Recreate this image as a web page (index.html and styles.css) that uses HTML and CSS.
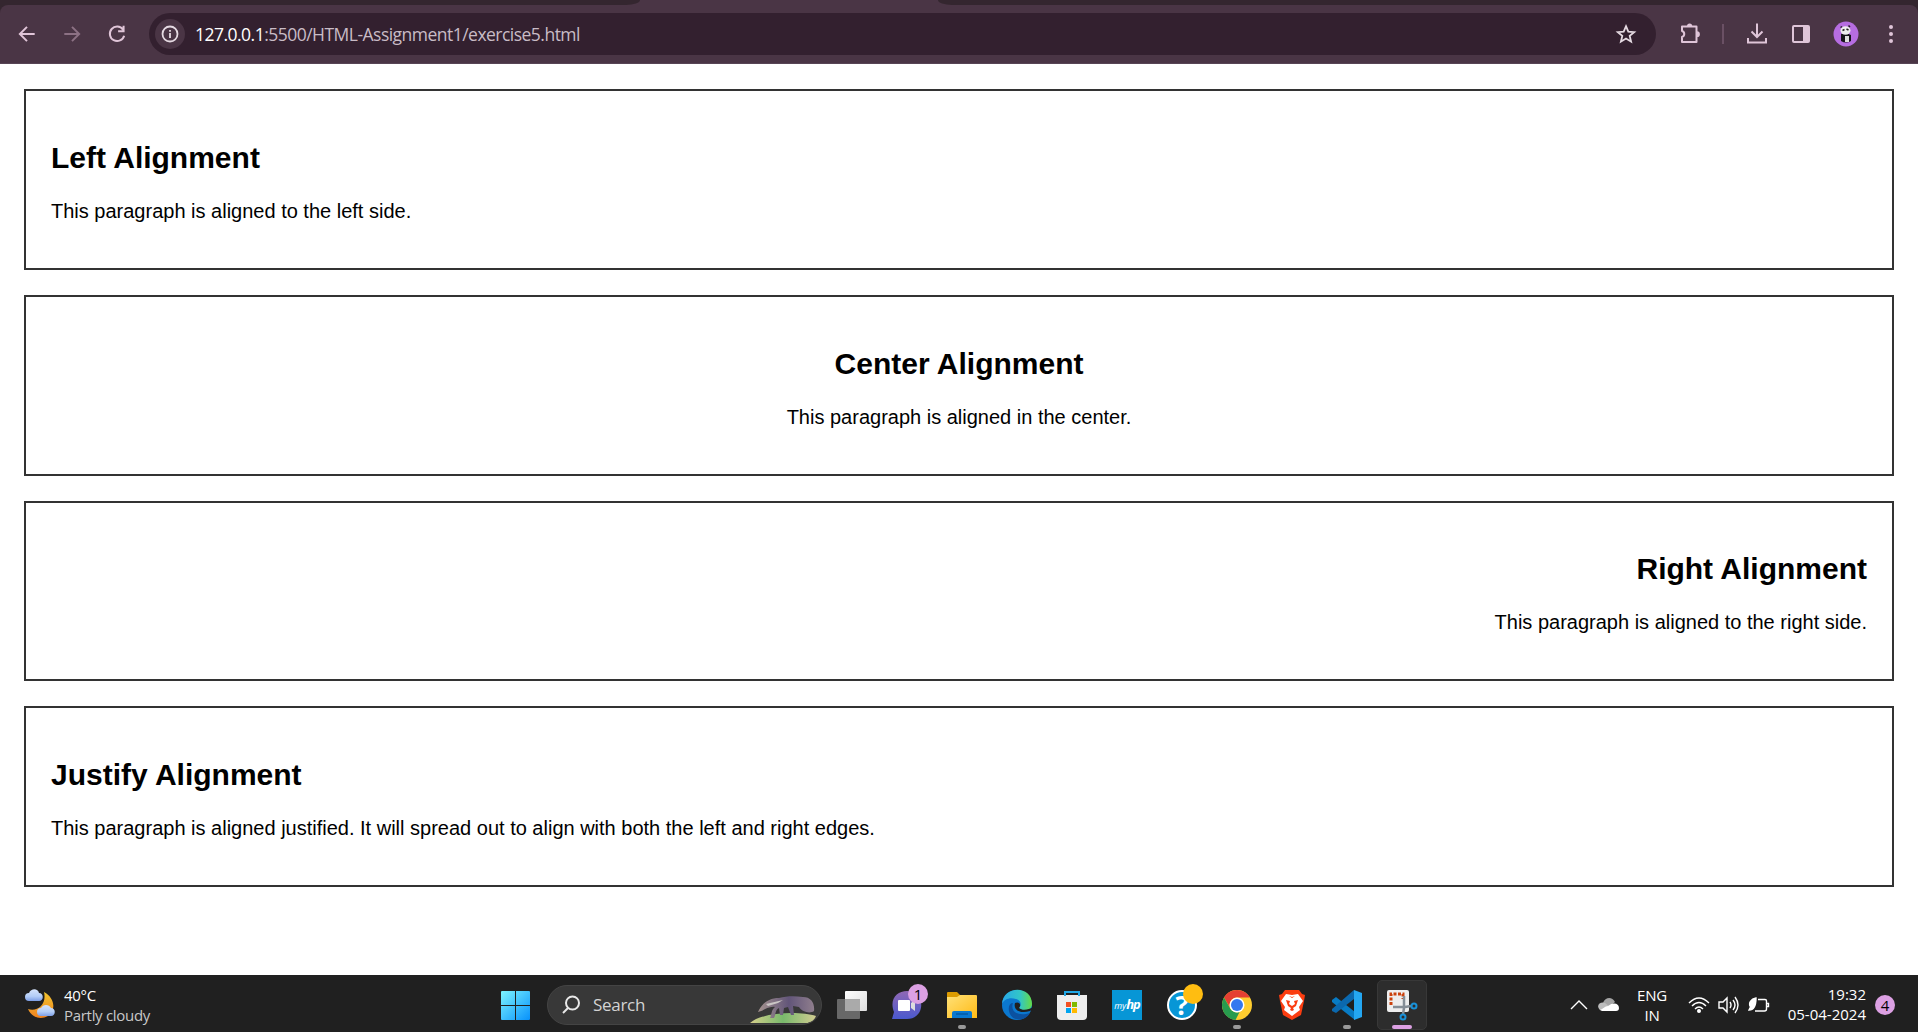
FILE: index.html
```html
<!DOCTYPE html>
<html lang="en">
<head>
<meta charset="utf-8">
<title>Text alignment</title>
<link rel="stylesheet" href="styles.css">
</head>
<body>
<header class="browser">
  <div class="tab-edge"><span class="tab-left"></span><span class="tab-right"></span></div>
  <div class="toolbar">
    <svg class="nav-icon" viewBox="0 0 20 20"><path d="M17 10H4M10 3.500 3.500 10l6.500 6.500"/></svg>
    <svg class="nav-icon dim" viewBox="0 0 20 20"><path d="M3 10h13M10 3.500l6.500 6.500-6.500 6.500"/></svg>
    <svg class="nav-icon" viewBox="0 0 20 20"><path d="M15.500 6A6.600 6.600 0 1 0 16.500 11.500M16 2.500v5h-5"/></svg>
    <div class="address">
      <span class="info"><svg width="18" height="18" viewBox="0 0 18 18"><circle cx="9" cy="9" r="7.500"/><path d="M9 8v5M9 5v1.800"/></svg></span>
      <span class="url"><b>127.0.0.1</b>:5500/HTML-Assignment1/exercise5.html</span>
      <svg class="star" width="22" height="22" viewBox="0 0 22 22"><path d="m11 3.200 2.300 5.400 5.900.5-4.500 3.800 1.400 5.800-5.100-3.100-5.100 3.100 1.400-5.800-4.500-3.800 5.900-.5z"/></svg>
    </div>
    <div class="actions">
      <svg width="24" height="24" viewBox="0 0 24 24"><path d="M4 4.500h14.500V20H4v-5c3-1 3-5 0-6z" stroke-linejoin="round"/><path class="solid" d="M9 4a2.600 2.600 0 0 1 5.200 0zM19 9.300a2.900 2.900 0 0 1 0 5.800z"/></svg>
      <i class="divider"></i>
      <svg width="24" height="24" viewBox="0 0 24 24"><path d="M12 1.500v13M6.500 9.500l5.500 5.500 5.500-5.500M3 16v4.500h18V16"/></svg>
      <svg width="24" height="24" viewBox="0 0 24 24"><rect x="4" y="4" width="16" height="16" rx="1"/><path class="solid" d="M14 4h6v16h-6z"/></svg>
      <svg class="avatar" width="26" height="26" viewBox="0 0 26 26"><circle cx="13" cy="13" r="12.500" fill="#b66de1"/><path d="M8 13q5-2 10 1v6q-5 3-10 0z" fill="#151419"/><ellipse cx="12.500" cy="9.500" rx="5" ry="4.200" fill="#eee"/><path d="M12 15h4v6h-4z" fill="#ddd"/><path d="M7.500 6.500l1.500-1M15.500 4.500l1.500 1.500M9.500 9.500l2-1M13.500 8l2 1" stroke="#222" stroke-width="1.500"/></svg>
      <svg width="24" height="24" viewBox="0 0 24 24"><g class="dots"><circle cx="12" cy="5" r="2"/><circle cx="12" cy="12" r="2"/><circle cx="12" cy="19" r="2"/></g></svg>
    </div>
  </div>
</header>
<main class="page">
  <section class="box left"><h2>Left Alignment</h2><p>This paragraph is aligned to the left side.</p></section>
  <section class="box center"><h2>Center Alignment</h2><p>This paragraph is aligned in the center.</p></section>
  <section class="box right"><h2>Right Alignment</h2><p>This paragraph is aligned to the right side.</p></section>
  <section class="box justify"><h2>Justify Alignment</h2><p>This paragraph is aligned justified. It will spread out to align with both the left and right edges.</p></section>
</main>
<footer class="taskbar">
  <div class="weather">
    <svg width="32" height="32" viewBox="0 0 32 32"><defs><linearGradient id="moon" x2="0" y2="1"><stop stop-color="#f2c52e"/><stop offset="1" stop-color="#ef8220"/></linearGradient><linearGradient id="cloud" x2="0" y2="1"><stop stop-color="#d5e3fb"/><stop offset=".6" stop-color="#b3cdf7"/><stop offset="1" stop-color="#7d9ee6"/></linearGradient></defs><path d="M20 3c10 5 13 18 4 24C17 31 8 29 4 20c9 3 19-4 16-17z" fill="url(#moon)"/><path d="M5 12a4 4 0 0 1 0-8c2-5 9-5 10 0 5 0 5 8 0 8z" fill="url(#cloud)"/><path d="M17 27a4 4 0 0 1 0-8c2-4 8-4 10 0 5 0 5 8 0 8z" fill="url(#cloud)"/></svg>
    <div><span class="temp">40°C</span><span class="sky">Partly cloudy</span></div>
  </div>
  <div class="apps">
    <svg class="start" width="29" height="29" viewBox="0 0 29 29"><defs><linearGradient id="win" gradientUnits="userSpaceOnUse" x2="29" y2="29"><stop stop-color="#7df4ff"/><stop offset="1" stop-color="#0791fb"/></linearGradient></defs><path fill="url(#win)" d="M0 1q0-1 1-1h13v14H0zM15 0h13q1 0 1 1v13H15zM0 15h14v14H1q-1 0-1-1zM15 15h14v13q0 1-1 1H15z"/></svg>
    <div class="search">
      <svg width="20" height="20" viewBox="0 0 20 20"><circle cx="11.500" cy="8" r="6.500"/><path d="m7 13-5 5"/></svg>
      <span>Search</span>
      <svg class="anteater" width="68" height="30" viewBox="0 0 68 30"><defs><linearGradient id="hill"><stop stop-color="#d5cf8b"/><stop offset=".5" stop-color="#79b96c"/><stop offset="1" stop-color="#d1cc91"/></linearGradient><linearGradient id="fur"><stop stop-color="#a4928e"/><stop offset=".55" stop-color="#625579"/><stop offset="1" stop-color="#8f7e8d"/></linearGradient></defs><path d="M1 29c12-11 50-12 66-7-2 5-6 7-10 7z" fill="url(#hill)"/><path d="M9 18c4-9 11-14 21-14 8-2 15-2 24-1 8 0 12 6 11 14-4 3-12 1-15-4l-6-1 1 9h-3l-3-8-4 1-1 7h-3l-1-7c-4 2-3 6-5 10h-4c2-4 1-8 5-11-7-1-11 4-17 5z" fill="url(#fur)"/><path d="m17 10 17-4-5 3-10 3z" fill="#cbc7c5"/></svg>
    </div>
    <div class="app"><svg width="32" height="32" viewBox="0 0 32 32"><defs><linearGradient id="tv" x2="1" y2="1"><stop stop-color="#fff"/><stop offset="1" stop-color="#ddd"/></linearGradient></defs><rect x="9" y="2" width="22" height="20" rx="1" fill="url(#tv)"/><rect x="1" y="10" width="23" height="20" rx="1" fill="#707070" opacity=".9"/><path d="M9 10h15v12H9z" fill="#aaa"/></svg></div>
    <div class="app"><svg width="32" height="32" viewBox="0 0 32 32"><defs><linearGradient id="chat" x2="0" y2="1"><stop stop-color="#9068b4"/><stop offset="1" stop-color="#4a59ce"/></linearGradient></defs><path d="M1 30l2-7C-2 10 6 2 16 2c19 0 19 28 0 28z" fill="url(#chat)"/><rect x="7" y="11" width="12" height="11" rx="1" fill="#fff"/><path d="m20 14 4-3v11l-4-3z" fill="#ddd"/></svg><em class="badge">1</em></div>
    <div class="app running"><svg width="32" height="32" viewBox="0 0 32 32"><defs><linearGradient id="fold" x2="1" y2="1"><stop stop-color="#ffe178"/><stop offset="1" stop-color="#ffba15"/></linearGradient></defs><path d="M1 4q0-1 1-1h9l4 4-2 5H1z" fill="#dc9b00"/><path d="M1 8h10l3-2h16q1 0 1 1v22H1z" fill="url(#fold)"/><path d="M6 29v-5q0-2 2-2h16q2 0 2 2v5z" fill="#0978d0"/><path d="M10 25h12" stroke="#004b8d"/></svg></div>
    <div class="app"><svg width="32" height="32" viewBox="0 0 32 32"><defs><linearGradient id="edge"><stop stop-color="#28a7e9"/><stop offset=".6" stop-color="#32c6c7"/><stop offset="1" stop-color="#65dc45"/></linearGradient></defs><circle cx="16" cy="16" r="15" fill="#0b78cf"/><path d="M1 15C2-4 31-4 31 15c0 7-10 8-13 4 3-3 2-8-3-9C9 8 3 10 1 15z" fill="url(#edge)"/><path d="M12 14c-3 8 4 14 17 10-5 9-19 9-21-2-1-5 1-8 4-8z" fill="#0b51a0"/><path d="M14 14c-2 7 5 11 15 8l3-2v-2c-4 3-11 4-14 1 3-3 0-7-4-5z" fill="#202020"/></svg></div>
    <div class="app"><svg width="32" height="32" viewBox="0 0 32 32"><path d="M1 6h30v21q0 4-4 4H5q-4 0-4-4z" fill="#eee"/><path d="M9 7V3h14v4" fill="none" stroke="#20a7e6" stroke-width="2"/><path d="M10 13h5v5h-5z" fill="#f25022"/><path d="M16 13h5v5h-5z" fill="#7fba00"/><path d="M10 19h5v5h-5z" fill="#00a4ef"/><path d="M16 19h5v5h-5z" fill="#ffb900"/></svg></div>
    <div class="app"><div class="hp">my<b>hp</b></div></div>
    <div class="app"><div class="help">?</div><em class="badge gold"></em></div>
    <div class="app running"><svg width="32" height="32" viewBox="0 0 32 32"><circle cx="16" cy="16" r="15" fill="#ffcd2f"/><path d="M3 8.500A15 15 0 0 1 29 8.500H16a7.500 7.500 0 0 0-6.500 11z" fill="#e53f32"/><path d="M3 8.500 9.500 20c2 3 6 4 9 3l-4 8A15 15 0 0 1 3 8.500z" fill="#279b4e"/><circle cx="16" cy="16" r="7.500" fill="#fff"/><circle cx="16" cy="16" r="6" fill="#3478ef"/></svg></div>
    <div class="app"><svg width="32" height="32" viewBox="0 0 32 32"><path d="M9 1h14l3 4 3 1-1 6-3 14-9 5-9-5L4 12 3 6l3-1z" fill="#fb3d10"/><path d="m16 6 6-1 5 7-4 6 1 3-8 6-8-6 1-3-4-6 5-7z" fill="#fff"/><path d="m10 11 4 1-1 3 3 2 3-2-1-3 4-1-2 6-3 2 1 2-2 1-2-1 1-2-3-2zM13 7l3 1 3-1-3 2z" fill="#fb3d10"/></svg></div>
    <div class="app running"><svg width="32" height="32" viewBox="0 0 32 32"><path d="m1 11 4-3 19 15v8L1 13z" fill="#087bc4"/><path d="m1 20 22-19v9L5 24l-4-2z" fill="#0b68ae"/><path d="m23 1 8 3v24l-8 3z" fill="#24a7f2"/></svg></div>
    <div class="app active"><svg width="32" height="32" viewBox="0 0 32 32"><rect x="1" y="1" width="22" height="22" rx="2" fill="#eee"/><path d="M5 16V5h12v5" fill="none" stroke="#cb420e" stroke-width="3" stroke-dasharray="3 1.500"/><path d="M18 7v12M7 18h12l6-1M18 19l-1 6" fill="none" stroke="#858e96" stroke-width="2.500"/><g fill="none" stroke="#1991d8" stroke-width="2"><circle cx="28" cy="17" r="2.500"/><circle cx="17" cy="28" r="2.500"/></g></svg></div>
  </div>
  <div class="tray">
    <svg class="chevron" width="18" height="12" viewBox="0 0 18 12"><path d="m1 10 8-8 8 8"/></svg>
    <svg class="onedrive" width="22" height="16" viewBox="0 0 22 16"><path d="M5 6c2-6 9-7 12-1l-8 7z" fill="#a5a5a5"/><path d="M2 13c-5-5 1-9 5-7l9 7z" fill="#bdbdbd"/><path d="M2 13c3-1 5-4 8-4 5-4 11-3 11 2 0 2-1 3-3 3H4z" fill="#fff"/></svg>
    <div class="lang"><span>ENG</span><span>IN</span></div>
    <svg class="wifi" width="22" height="18" viewBox="0 0 22 18"><path d="M1 7q10-10 20 0M4 10q7-7 14 0M7 13q4-4 8 0"/><circle cx="11" cy="15" r="1.300"/></svg>
    <svg class="volume" width="22" height="18" viewBox="0 0 22 18"><path d="M1 6h4l4-4v14l-4-4H1zM12 6q2 3 0 6M15 4q4 5 0 10M17 1q6 8 0 16"/></svg>
    <svg class="battery" width="22" height="18" viewBox="0 0 22 18"><path d="M10 3.500h7q1.500 0 1.500 1.500v8q0 2-2 2H7M19 7.500h1.500v3H19"/><path class="leaf" d="M8 2C3 3 0 7 2.500 11l-1.500 3c5 0 7-4 7-12z"/></svg>
    <div class="clock"><span>19:32</span><span>05-04-2024</span></div>
    <em class="notice">4</em>
  </div>
</footer>
</body>
</html>
```
FILE: styles.css
```css
* { box-sizing: border-box; }
body { margin: 0; height: 1032px; overflow: hidden; display: flex; flex-direction: column; background: #fff; font-family: "Liberation Sans", Arial, sans-serif; color: #000; }
svg { display: block; flex: none; }
em { font-style: normal; }

.browser { flex: none; height: 64px; background: #4a3545; border-bottom: 1px solid #574555; }
.tab-edge { height: 5px; display: flex; justify-content: space-between; }
.tab-left { width: 640px; background: #34262f; border-bottom-right-radius: 14px 5px; }
.tab-right { width: 980px; background: #34262f; border-bottom-left-radius: 14px 5px; }
.toolbar { height: 58px; display: flex; align-items: center; padding: 0 0 0 16px; background: #4a3545; border-radius: 8px 8px 0 0; }
.browser { background: linear-gradient(#34262f 15px, #4a3545 15px); }
.nav-icon { width: 22px; height: 22px; margin: 0 23px 0 0; fill: none; stroke: #e0c5d8; stroke-width: 1.800; }
.nav-icon.dim { stroke: #8c7184; }
.tab-edge { background: #4a3545; }
.address { width: 1507px; height: 42px; margin: 0 0 1px -2px; padding: 0 19px 0 6px; border-radius: 21px; background: #33202f; display: flex; align-items: center; }
.info { width: 30px; height: 30px; border-radius: 50%; background: #4a3545; display: grid; place-items: center; }
.info svg, .star { fill: none; stroke: #e5dae2; stroke-width: 1.800; }
.url { margin: 1px 0 0 10px; font: 17.5px "Open Sans", "Noto Sans", sans-serif; letter-spacing: -.52px; color: #c9bcc6; white-space: nowrap; }
.url b { font-weight: 400; color: #fff; }
.star { margin-left: auto; }
.actions { display: flex; align-items: center; margin: 0 0 0 22px; }
.actions svg { fill: none; stroke: #dfc5d8; stroke-width: 2; }
.actions .solid, .dots { fill: #dfc5d8; stroke: none; }
.divider { width: 2px; height: 20px; background: #6a5064; margin: 0 21px 0 20px; }
.actions svg + svg { margin-left: 20px; }
.actions .avatar { stroke: none; }

.page { flex: 1; min-height: 0; padding: 25px 24px 0; }
.box { height: 180.75px; border: 2px solid #333; padding: 25px; margin-bottom: 25px; }
.box h2 { margin: 24.8px 0 0; font-size: 30px; line-height: 34px; }
.box p { margin: 25px 0 0; font-size: 20px; line-height: 23px; }
.left { text-align: left; }
.center { text-align: center; }
.right { text-align: right; }
.justify { text-align: justify; }

.taskbar { flex: none; height: 57px; display: flex; align-items: center; background: #202020; font: 15px/20px "Open Sans", "Noto Sans", sans-serif; color: #fff; }
.taskbar span { white-space: nowrap; }
.weather { width: 501px; padding: 2px 0 0 24px; display: flex; align-items: center; gap: 8px; letter-spacing: -.3px; }
.weather span { display: block; }
.sky { color: #c8c8c8; }
.apps { height: 57px; display: flex; align-items: center; }
.start { margin: 4px 17px 0 0; }
.search { width: 275px; height: 40px; margin: 3px 5px 0 0; border: 1px solid #444; border-radius: 20px; background: #383838; padding-left: 13px; display: flex; align-items: center; color: #d3d3d3; font-size: 17px; letter-spacing: -.3px; overflow: hidden; }
.search svg { fill: none; stroke: #e8e8e8; stroke-width: 2; }
.search span { margin-left: 12px; }
.search .anteater { stroke: none; margin: 7px 4px 0 auto; }
.app { width: 50px; height: 50px; margin: 3px 5px 0 0; border-radius: 5px; display: grid; place-items: center; position: relative; }
.app::after { content: ""; position: absolute; bottom: 1px; left: 21px; width: 8px; height: 4px; border-radius: 2px; }
.running::after { background: #999; }
.active { background: #2d2d2d; border: 1px solid #383838; }
.active::after { background: #dca0e3; width: 20px; left: 14px; bottom: 0; }
.badge, .notice { width: 20px; height: 20px; border-radius: 50%; background: #dca0e3; color: #000; text-align: center; }
.badge { position: absolute; right: 4px; top: 4px; }
.badge.gold { background: #ffbd11; }
.hp { width: 30px; height: 30px; background: #0796d6; font: italic 9px/28px "Open Sans", sans-serif; text-align: center; }
.hp b { font-size: 13px; letter-spacing: -1px; }
.help { width: 30px; height: 30px; border: 2px solid #fff; border-radius: 50%; background: #0796d6; font-size: 27px; line-height: 26px; font-weight: 700; text-align: center; }
.tray { margin-left: auto; display: flex; align-items: center; }
.tray svg { fill: none; stroke: #fff; stroke-width: 1.400; margin-top: 2px; }
.tray .onedrive { stroke: none; margin: 2px 16px 0 10px; }
.lang { width: 32px; padding-top: 2px; text-align: center; letter-spacing: -.2px; }
.lang span, .clock span { display: block; }
.tray .wifi { margin-left: 20px; }
.wifi circle, .leaf { fill: #fff; }
.tray .volume { margin: 2px 8px 0; }
.clock { width: 80px; margin-left: 16px; text-align: right; }
.notice { margin: 3px 23px 0 9px; line-height: 21px; }
```
